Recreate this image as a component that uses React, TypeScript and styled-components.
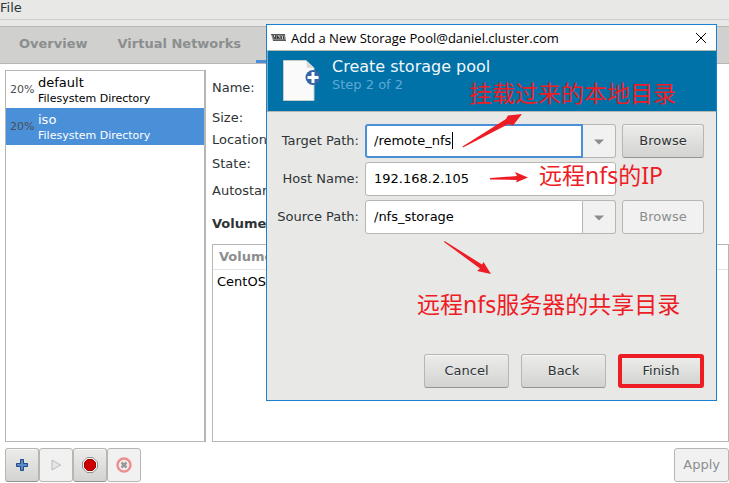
import React from "react";
import styled, { createGlobalStyle, css } from "styled-components";

const GlobalStyle = createGlobalStyle`
  *, *::before, *::after { box-sizing: border-box; }
  body {
    margin: 0;
    background: #fff;
    color: #2e3436;
    font-family: "DejaVu Sans", sans-serif;
    font-size: 13px;
    line-height: 16px;
  }
  button, input { font: inherit; color: inherit; }
`;

const Page = styled.div`
  position: relative;
  display: flex;
  flex-direction: column;
  min-height: 100vh;
  overflow: hidden;
`;

const MenuBar = styled.nav`
  height: 26px;
  background: #e8e8e7;
  &::after {
    content: "";
    display: block;
    height: 1px;
    background: #cfcfcd;
  }
`;

const MenuItem = styled.button`
  display: block;
  height: 19px;
  padding: 0 0 4px;
  border: 0;
  background: none;
  line-height: 15px;
`;

const TabBar = styled.div`
  display: flex;
  height: 38px;
  border-top: 1px solid #b6b6b3;
  border-bottom: 1px solid #b6b6b3;
  background: #d0d0ce;
`;

const Tab = styled.button<{ $active?: boolean }>`
  min-width: 80px;
  padding: 0 15px;
  border: 0;
  border-bottom: 3px solid ${(p) => (p.$active ? "#4a90d9" : "transparent")};
  background: none;
  color: ${(p) => (p.$active ? "#2e3436" : "#8b8e8f")};
  font-weight: bold;
  &:first-child { margin-left: 4px; }
`;

const Workspace = styled.main`
  display: grid;
  flex: 1;
  grid-template-columns: 201px minmax(0, 1fr);
  grid-template-rows: minmax(0, 1fr) 34px;
  column-gap: 6px;
  row-gap: 6px;
  padding: 6px 0 1px 5px;
`;

const PoolList = styled.ul`
  margin: 0;
  padding: 0;
  border: 1px solid #b6b6b3;
  border-right-width: 2px;
  list-style: none;
`;

const PoolRow = styled.li<{ $selected?: boolean }>`
  display: flex;
  align-items: center;
  height: 37px;
  padding-left: 4px;
  gap: 4px;
  background: ${(p) => (p.$selected ? "#4a90d9" : "transparent")};
  color: ${(p) => (p.$selected ? "#fff" : "#000")};
`;

const Usage = styled.span`
  width: 24px;
  color: #4a4e50;
  font-size: 11px;
`;

const PoolText = styled.div`
  display: flex;
  flex-direction: column;
  padding-top: 2px;
`;

const PoolKind = styled.span`
  font-size: 11px;
`;

const Details = styled.section`
  display: flex;
  flex-direction: column;
`;

const Facts = styled.div`
  display: grid;
  grid-template-rows: 35px 25px 20px 27px 27px;
  align-items: center;
`;

const VolumesTitle = styled.h2`
  margin: 12px 0;
  font-size: 13px;
`;

const VolumeTable = styled.table`
  flex: 1;
  display: block;
  border: 1px solid #b6b6b3;
  border-collapse: collapse;
  thead, tbody, tr, th, td { display: block; }
  th {
    height: 25px;
    padding: 4px 6px;
    border-bottom: 1px solid #e3e3e1;
    color: #8b8e8f;
    text-align: left;
  }
  td { padding: 4px; color: #000; }
`;

const raised = css`
  background: linear-gradient(#ececeb, #d3d3d1);
  border-color: #b6b6b3 #b6b6b3 #949492;
  box-shadow: inset 0 1px #f7f7f6;
  text-shadow: 0 1px #fff8;
`;

const PushButton = styled.button<{ $marked?: boolean; $width?: number }>`
  display: flex;
  align-items: center;
  justify-content: center;
  width: ${(p) => (p.$width ? p.$width + "px" : "auto")};
  height: 34px;
  padding: 0 8px;
  border: 1px solid #b6b6b3;
  border-radius: 3px;
  ${raised}
  &:disabled {
    border-color: #b6b6b3;
    background: #f1f1f1;
    box-shadow: none;
    text-shadow: none;
    color: #8b8e8f;
  }
  ${(p) => p.$marked && css`border: 4px solid #ee1c25; box-shadow: none;`}
`;

const ToolGroup = styled.div`
  display: flex;
`;

const ApplyCell = styled.div`
  display: flex;
  justify-content: flex-end;
`;

const Dialog = styled.section`
  position: absolute;
  top: 24px;
  right: 12px;
  left: 266px;
  border: 1px solid #1b80cf;
  background: #e8e8e7;
`;

const TitleBar = styled.header`
  display: flex;
  align-items: center;
  height: 26px;
  padding: 0 9px 0 4px;
  border-bottom: 1px solid #b6b6b3;
  background: #fff;
  color: #000;
  font-family: "Open Sans", sans-serif;
  font-size: 13px;
`;

const TitleText = styled.span`
  flex: 1;
  margin-left: 5px;
`;

const CloseButton = styled.button`
  display: flex;
  padding: 0;
  border: 0;
  background: none;
`;

const Banner = styled.div`
  display: flex;
  height: 61px;
  padding: 6px 10px 0;
  gap: 10px;
  border-bottom: 1px solid #b6b6b3;
  border-left: 1px solid #86a9b8;
  background: #0072a8;
`;

const BannerTitle = styled.h1`
  margin: 0;
  color: #f2f7fa;
  font-size: 16px;
  font-weight: normal;
  line-height: 20px;
`;

const BannerStep = styled.p`
  margin: 0;
  color: #5fa8d6;
  line-height: 16px;
`;

const Form = styled.form`
  padding: 12px;
`;

const Fields = styled.div`
  display: grid;
  grid-template-columns: 80px minmax(0, 1fr) 82px;
  align-items: center;
  gap: 4px 6px;
`;

const Label = styled.label`
  display: flex;
  justify-content: flex-end;
  white-space: nowrap;
`;

const Combo = styled.div`
  position: relative;
  display: flex;
`;

const Entry = styled.input<{ $joined?: boolean; $focused?: boolean }>`
  flex: 1;
  width: 100%;
  min-width: 0;
  height: 34px;
  padding: 0 8px 2px;
  border: 1px solid #b6b6b3;
  border-radius: ${(p) => (p.$joined ? "3px 0 0 3px" : "3px")};
  outline: 0;
  background: #fff;
  color: #000;
  ${(p) => p.$focused && css`border: 2px solid #4a90d9; padding: 0 7px 2px;`}
`;

const TextCursor = styled.span`
  position: absolute;
  top: 8px;
  left: 87px;
  width: 1px;
  height: 17px;
  background: #000;
`;

const DropButton = styled.button`
  width: 33px;
  height: 34px;
  padding: 0;
  border: 1px solid #b6b6b3;
  border-left: 0;
  border-radius: 0 3px 3px 0;
  background: #f1f1f1;
`;

const Actions = styled.div`
  display: flex;
  justify-content: flex-end;
  margin-top: 120px;
  gap: 12px;
`;

const Note = styled.span<{ $x: number; $y: number }>`
  position: absolute;
  top: ${(p) => p.$y}px;
  left: ${(p) => p.$x}px;
  color: #ee1c25;
  font-family: "Noto Sans", "Noto Sans CJK SC", sans-serif;
  font-size: 23px;
  line-height: 32px;
  white-space: nowrap;
  pointer-events: none;
`;

const Arrows = styled.svg`
  position: absolute;
  top: 0;
  left: 0;
  pointer-events: none;
`;

const Caret = () => (
  <svg width="10" height="6" viewBox="0 0 10 6" aria-hidden="true">
    <path d="M0 0.5H10L5 5.5Z" fill="#8b8e8f" />
  </svg>
);

const PlusIcon = () => (
  <svg width="14" height="14" viewBox="0 0 14 14" aria-hidden="true">
    <path d="M5.5 1.500h3v4h4v3h-4v4h-3v-4h-4v-3h4z" fill="#5c8ac4" stroke="#204a87" strokeLinejoin="round" />
  </svg>
);

const PlayIcon = () => (
  <svg width="14" height="14" viewBox="0 0 14 14" aria-hidden="true">
    <path d="M3 2L11.5 7L3 12Z" fill="#e6e6e5" stroke="#b9b9b8" strokeLinejoin="round" />
  </svg>
);

const RecordIcon = () => (
  <svg width="16" height="16" viewBox="0 0 16 16" aria-hidden="true">
    <path d="M5 .5h6L15.5 5v6L11 15.5H5L.5 11V5z" fill="#f2f2f0" stroke="#8f9192" />
    <path d="M5.500 2.500h5l3 3v5l-3 3h-5l-3-3v-5z" fill="#cc0000" stroke="#a40000" />
  </svg>
);

const StopIcon = () => (
  <svg width="16" height="16" viewBox="0 0 16 16" aria-hidden="true">
    <circle cx="8" cy="8" r="6.5" fill="#f4f0f0" stroke="#ee8f8f" strokeWidth="2.5" />
    <path d="M5.500 5.500l5 5M10.500 5.500l-5 5" stroke="#999" strokeWidth="2.500" />
  </svg>
);

const AppIcon = () => (
  <svg width="15" height="9" viewBox="0 0 15 9" aria-hidden="true">
    <path d="M0 1h14l1 7H2z" fill="#858585" />
    <path d="M0 1.500h14M2 7.500h13" stroke="#5a5a5a" />
    <path d="M2 2l2 4 1-4M6.500 6V3l2 3M10 3l.5 3M12 2.500l1 4" fill="none" stroke="#3c3c3c" />
    <path d="M3.500 2v2M7.500 2.500l1 2M11.500 3v3" stroke="#d0d0d0" />
  </svg>
);

const PageIcon = () => (
  <svg width="44" height="46" viewBox="0 0 44 46" aria-hidden="true">
    <path d="M5.500 3.500H28L36 11V43.500H5.500Z" fill="#fafafa" stroke="#c4cdc9" />
    <path d="M28 3.500C29 7 29 9 28.500 11C31 10.500 34 10.500 36 11Z" fill="#d9dad8" />
    <circle cx="35" cy="20.5" r="7.500" fill="#3465a4" />
    <path d="M35 15v11M29.500 20.500h11" stroke="#fff" strokeWidth="3" />
  </svg>
);

const FACTS = ["Name:", "Size:", "Location:", "State:", "Autostart:"];

export default function App() {
  return (
    <>
      <GlobalStyle />
      <Page>
        <MenuBar>
          <MenuItem>File</MenuItem>
        </MenuBar>
        <TabBar role="tablist">
          <Tab role="tab">Overview</Tab>
          <Tab role="tab">Virtual Networks</Tab>
          <Tab role="tab" aria-label="Storage" aria-selected $active />
        </TabBar>
        <Workspace>
          <PoolList>
            <PoolRow>
              <Usage>20%</Usage>
              <PoolText>
                default
                <PoolKind>Filesystem Directory</PoolKind>
              </PoolText>
            </PoolRow>
            <PoolRow $selected>
              <Usage>20%</Usage>
              <PoolText>
                iso
                <PoolKind>Filesystem Directory</PoolKind>
              </PoolText>
            </PoolRow>
          </PoolList>
          <Details>
            <Facts>
              {FACTS.map((fact) => <span key={fact}>{fact}</span>)}
            </Facts>
            <VolumesTitle>Volumes</VolumesTitle>
            <VolumeTable>
              <thead><tr><th>Volumes</th></tr></thead>
              <tbody><tr><td>CentOS-7</td></tr></tbody>
            </VolumeTable>
          </Details>
          <ToolGroup>
            <PushButton $width={34} aria-label="Add pool"><PlusIcon /></PushButton>
            <PushButton $width={34} aria-label="Start pool" disabled><PlayIcon /></PushButton>
            <PushButton $width={34} aria-label="Stop pool"><RecordIcon /></PushButton>
            <PushButton $width={34} aria-label="Delete pool" disabled><StopIcon /></PushButton>
          </ToolGroup>
          <ApplyCell>
            <PushButton disabled>Apply</PushButton>
          </ApplyCell>
        </Workspace>

        <Dialog role="dialog" aria-labelledby="dialog-title">
          <TitleBar>
            <AppIcon />
            <TitleText id="dialog-title">Add a New Storage Pool@daniel.cluster.com</TitleText>
            <CloseButton aria-label="Close">
              <svg width="12" height="12" viewBox="0 0 12 12" aria-hidden="true">
                <path d="M1 1L11 11M11 1L1 11" stroke="#000" />
              </svg>
            </CloseButton>
          </TitleBar>
          <Banner>
            <PageIcon />
            <div>
              <BannerTitle>Create storage pool</BannerTitle>
              <BannerStep>Step 2 of 2</BannerStep>
            </div>
          </Banner>
          <Form onSubmit={(e) => e.preventDefault()}>
            <Fields>
              <Label htmlFor="target">Target Path:</Label>
              <Combo>
                <Entry id="target" defaultValue="/remote_nfs" $joined $focused />
                <TextCursor />
                <DropButton type="button" aria-label="Target path choices"><Caret /></DropButton>
              </Combo>
              <PushButton type="button">Browse</PushButton>
              <Label htmlFor="host">Host Name:</Label>
              <Entry id="host" defaultValue="192.168.2.105" />
              <span />
              <Label htmlFor="source">Source Path:</Label>
              <Combo>
                <Entry id="source" defaultValue="/nfs_storage" $joined />
                <DropButton type="button" aria-label="Source path choices"><Caret /></DropButton>
              </Combo>
              <PushButton type="button" disabled>Browse</PushButton>
            </Fields>
            <Actions>
              <PushButton type="button" $width={85}>Cancel</PushButton>
              <PushButton type="button" $width={85}>Back</PushButton>
              <PushButton type="submit" $width={86} $marked>Finish</PushButton>
            </Actions>
          </Form>
          <Note $x={202} $y={52}>挂载过来的本地目录</Note>
          <Note $x={272} $y={134}>远程nfs的IP</Note>
          <Note $x={150} $y={263}>远程nfs服务器的共享目录</Note>
          <Arrows width="449" height="375" viewBox="267 25 449 375" fill="#ee1c25" aria-hidden="true">
            <path d="M462.500 146.500L506 119L508 115.500L522 114L513 125.500L508.500 124L463 147.500Z" />
            <path d="M490 178L517 176L515 172L528 177.500L516 182.500L517 180L490 179.500Z" />
            <path d="M444.500 241L482 264.500L483.500 262L491 274L477 271L480 268.500L444 242Z" />
          </Arrows>
        </Dialog>
      </Page>
    </>
  );
}
